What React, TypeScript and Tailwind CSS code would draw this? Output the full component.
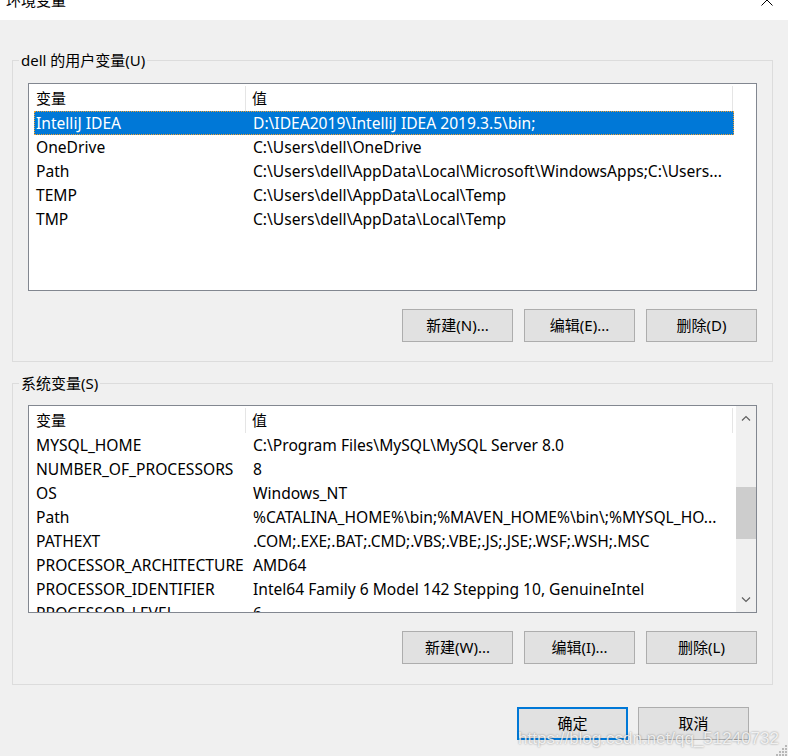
import React from "react";

type EnvVar = { name: string; value: string };

const userVars: EnvVar[] = [
  { name: "IntelliJ IDEA", value: "D:\\IDEA2019\\IntelliJ IDEA 2019.3.5\\bin;" },
  { name: "OneDrive", value: "C:\\Users\\dell\\OneDrive" },
  { name: "Path", value: "C:\\Users\\dell\\AppData\\Local\\Microsoft\\WindowsApps;C:\\Users..." },
  { name: "TEMP", value: "C:\\Users\\dell\\AppData\\Local\\Temp" },
  { name: "TMP", value: "C:\\Users\\dell\\AppData\\Local\\Temp" },
];

const systemVars: EnvVar[] = [
  { name: "MYSQL_HOME", value: "C:\\Program Files\\MySQL\\MySQL Server 8.0" },
  { name: "NUMBER_OF_PROCESSORS", value: "8" },
  { name: "OS", value: "Windows_NT" },
  { name: "Path", value: "%CATALINA_HOME%\\bin;%MAVEN_HOME%\\bin\\;%MYSQL_HO..." },
  { name: "PATHEXT", value: ".COM;.EXE;.BAT;.CMD;.VBS;.VBE;.JS;.JSE;.WSF;.WSH;.MSC" },
  { name: "PROCESSOR_ARCHITECTURE", value: "AMD64" },
  { name: "PROCESSOR_IDENTIFIER", value: "Intel64 Family 6 Model 142 Stepping 10, GenuineIntel" },
  { name: "PROCESSOR_LEVEL", value: "6" },
];

function Button({ label, primary }: { label: string; primary?: boolean }) {
  return (
    <button
      className={
        primary
          ? "flex h-[33px] w-[111px] items-center justify-center border-2 border-[#0078d7] bg-[#e1e1e1] text-[15px] text-black"
          : "flex h-[33px] w-[111px] items-center justify-center border border-[#adadad] bg-[#e1e1e1] text-[15px] text-black"
      }
    >
      {label}
    </button>
  );
}

function VarList({ rows, selected, scroll }: { rows: EnvVar[]; selected?: number; scroll?: boolean }) {
  return (
    <div className="flex h-[208px] w-[729px] overflow-hidden border border-[#828790] bg-white">
      <div className="flex min-w-0 flex-1 flex-col">
        {/* column headers */}
        <div className="flex h-[27px] shrink-0 pt-[2px] text-[15px] text-black">
          <div className="flex w-[217px] items-center border-r border-[#e5e5e5] pl-[7px]">变量</div>
          <div className="flex w-[487px] items-center border-r border-[#e5e5e5] pl-[6px]">值</div>
        </div>
        {rows.map((r, i) => {
          const sel = i === selected;
          return (
            <div
              key={r.name}
              className={
                sel
                  ? "ml-[5px] flex h-[24px] w-[700px] shrink-0 items-center border border-dotted border-[#f0a030] bg-[#0078d7] pt-[2px] text-[15.6px] text-white"
                  : "ml-[5px] flex h-[24px] w-[700px] shrink-0 items-center border border-transparent pt-[2px] text-[15.6px] text-black"
              }
            >
              <div className="w-[212px] shrink-0 overflow-hidden whitespace-nowrap pl-[1px]">{r.name}</div>
              <div className="min-w-0 flex-1 overflow-hidden whitespace-nowrap pl-[6px]">{r.value}</div>
            </div>
          );
        })}
      </div>
      {scroll && (
        <div className="flex w-[20px] shrink-0 flex-col bg-[#f0f0f0]">
          <div className="flex h-[24px] items-center justify-center">
            <svg width="10" height="6" viewBox="0 0 10 6">
              <path d="M1 5.5 L5 1.5 L9 5.5" fill="none" stroke="#606060" strokeWidth="1.2" />
            </svg>
          </div>
          <div className="flex-1">
            <div className="mt-[57px] h-[52px] bg-[#cdcdcd]" />
          </div>
          <div className="flex h-[24px] items-center justify-center">
            <svg width="10" height="6" viewBox="0 0 10 6">
              <path d="M1 0.5 L5 4.5 L9 0.5" fill="none" stroke="#606060" strokeWidth="1.2" />
            </svg>
          </div>
        </div>
      )}
    </div>
  );
}

function Group({ title, children }: { title: string; children: React.ReactNode }) {
  return (
    <fieldset className="ml-[12px] w-[761px] border border-[#dcdcdc]">
      <legend className="ml-[6px] px-[2px] text-[15px] leading-[20px] text-black">{title}</legend>
      <div className="px-[15px]">{children}</div>
    </fieldset>
  );
}

export default function App() {
  return (
    <div className="relative h-[756px] w-[788px] overflow-hidden bg-[#f0f0f0] font-['Noto_Sans','Noto_Sans_CJK_SC',sans-serif]">
      <div className="flex h-[20px] items-start justify-between bg-white">
        <div className="-mt-[7px] pl-[6px] text-[15px] leading-[15px] text-black">环境变量</div>
        <svg className="-mt-[6px] mr-[15px]" width="12" height="12" viewBox="0 0 12 12">
          <path d="M0.5 0.5 L11.5 11.5 M11.5 0.5 L0.5 11.5" stroke="#000" strokeWidth="1" />
        </svg>
      </div>

      <div className="mt-[30px]">
        <Group title="dell 的用户变量(U)">
          <div className="mt-[13px]">
            <VarList rows={userVars} selected={0} />
          </div>
          <div className="mt-[18px] mb-[19px] flex justify-end gap-[11px]">
            <Button label="新建(N)..." />
            <Button label="编辑(E)..." />
            <Button label="删除(D)" />
          </div>
        </Group>
      </div>

      <div className="mt-[11px]">
        <Group title="系统变量(S)">
          <div className="mt-[12px]">
            <VarList rows={systemVars} scroll />
          </div>
          <div className="mt-[18px] mb-[20px] flex justify-end gap-[11px]">
            <Button label="新建(W)..." />
            <Button label="编辑(I)..." />
            <Button label="删除(L)" />
          </div>
        </Group>
      </div>

      <div className="mt-[22px] flex justify-end gap-[10px] pr-[39px]">
        <Button label="确定" primary />
        <Button label="取消" />
      </div>

      {/* blog watermark */}
      <div className="absolute right-[9px] top-[726px] font-['Liberation_Sans',sans-serif] text-[17px] text-white/80 [text-shadow:0_0_2px_rgba(0,0,0,0.45)]">
        https://blog.csdn.net/qq_51240732
      </div>

      {/* resize grip */}
      <svg className="absolute bottom-0 right-0" width="12" height="12" viewBox="0 0 12 12">
        <rect x="9" y="1" width="2" height="2" fill="#b8b8b8" />
        <rect x="6" y="4" width="2" height="2" fill="#b8b8b8" />
        <rect x="9" y="4" width="2" height="2" fill="#b8b8b8" />
        <rect x="3" y="7" width="2" height="2" fill="#b8b8b8" />
        <rect x="6" y="7" width="2" height="2" fill="#b8b8b8" />
        <rect x="9" y="7" width="2" height="2" fill="#b8b8b8" />
        <rect x="0" y="10" width="2" height="2" fill="#b8b8b8" />
        <rect x="3" y="10" width="2" height="2" fill="#b8b8b8" />
        <rect x="6" y="10" width="2" height="2" fill="#b8b8b8" />
        <rect x="9" y="10" width="2" height="2" fill="#b8b8b8" />
      </svg>
    </div>
  );
}
